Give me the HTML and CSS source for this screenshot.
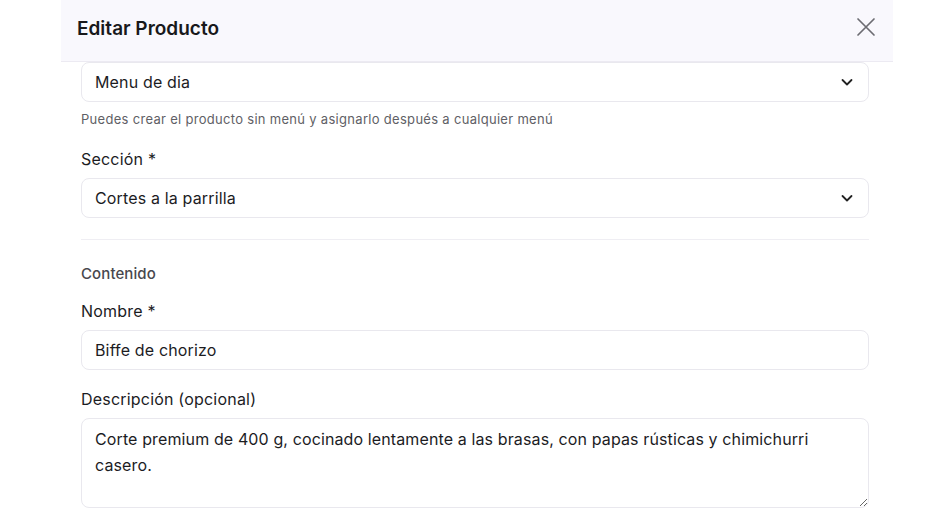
FILE: index.html
```html
<!DOCTYPE html>
<html lang="es">
<head>
<meta charset="utf-8">
<title>Editar Producto</title>
<link rel="stylesheet" href="styles.css">
</head>
<body>
<div class="modal">
  <header class="modal-header">
    <h2 class="modal-title">Editar Producto</h2>
    <button class="close-btn" aria-label="Cerrar">
      <svg width="20" height="20" viewBox="0 0 20 20" fill="none" stroke="currentColor" stroke-width="1.7" stroke-linecap="round"><path d="M2 2L18 18M18 2L2 18"/></svg>
    </button>
  </header>
  <div class="modal-body">
    <div class="select">
      <span>Menu de dia</span>
      <svg class="chev" width="14" height="14" viewBox="0 0 14 14" fill="none" stroke="currentColor" stroke-width="1.8" stroke-linecap="round" stroke-linejoin="round"><path d="M2.5 5L7 9.5L11.5 5"/></svg>
    </div>
    <p class="helper">Puedes crear el producto sin menú y asignarlo después a cualquier menú</p>

    <label class="label label-first">Sección *</label>
    <div class="select">
      <span>Cortes a la parrilla</span>
      <svg class="chev" width="14" height="14" viewBox="0 0 14 14" fill="none" stroke="currentColor" stroke-width="1.8" stroke-linecap="round" stroke-linejoin="round"><path d="M2.5 5L7 9.5L11.5 5"/></svg>
    </div>

    <hr class="divider">

    <h3 class="section-title">Contenido</h3>

    <label class="label label-name">Nombre *</label>
    <input class="input" type="text" value="Biffe de chorizo">

    <label class="label label-desc">Descripción (opcional)</label>
    <textarea class="textarea">Corte premium de 400 g, cocinado lentamente a las brasas, con papas rústicas y chimichurri casero.</textarea>
  </div>
</div>
</body>
</html>
```
FILE: styles.css
```css
* { box-sizing: border-box; }
html, body {
  margin: 0;
  background: #ffffff;
  font-family: Inter, "Noto Sans", "Liberation Sans", sans-serif;
  color: #1c1c1f;
}
.modal {
  margin-left: 61px;
  width: 832px;
  height: 524px;
  background: #ffffff;
  display: flex;
  flex-direction: column;
  overflow: hidden;
}
.modal-header {
  height: 62px;
  flex: none;
  background: #f9f8fd;
  border-bottom: 1px solid #eceaf2;
  display: flex;
  align-items: center;
  justify-content: space-between;
  padding: 0 15px 0 16px;
}
.modal-title {
  margin: 0;
  font-size: 19px;
  font-weight: 600;
  letter-spacing: 0;
  color: #18181b;
  padding-bottom: 5px;
}
.close-btn {
  border: 0;
  background: transparent;
  color: #6c6c72;
  padding: 0;
  width: 24px;
  height: 24px;
  display: flex;
  align-items: center;
  justify-content: center;
  margin-bottom: 8px;
}
.modal-body {
  padding: 0 24px 0 20px;
  display: flex;
  flex-direction: column;
}
.select {
  height: 40px;
  border: 1px solid #e9e8ee;
  border-radius: 8px;
  display: flex;
  align-items: center;
  justify-content: space-between;
  padding: 0 14px 0 13px;
  font-size: 16px;
  letter-spacing: 0.15px;
  color: #1c1c1f;
}
.chev { color: #222; }
.helper {
  margin: 8px 0 0;
  font-size: 13px;
  line-height: 18px;
  letter-spacing: 0.3px;
  color: #5f5f66;
}
.label {
  display: block;
  font-size: 16px;
  line-height: 24px;
  font-weight: 400;
  letter-spacing: 0.2px;
  color: #1c1c1f;
  margin-bottom: 7px;
}
.label-first { margin-top: 19px; }
.divider {
  border: 0;
  border-top: 1px solid #efeef3;
  margin: 21px 0 0;
  height: 0;
}
.section-title {
  margin: 24px 0 0;
  font-size: 15px;
  line-height: 20px;
  font-weight: 500;
  letter-spacing: 0.1px;
  color: #48484e;
}
.label-name { margin-top: 15px; }
.label-desc { margin-top: 17px; }
.input {
  height: 40px;
  width: 100%;
  border: 1px solid #e9e8ee;
  border-radius: 8px;
  padding: 0 13px;
  font-family: inherit;
  font-size: 16px;
  letter-spacing: 0.15px;
  color: #1c1c1f;
  background: #fff;
  outline: none;
}
.textarea {
  width: 100%;
  height: 90px;
  border: 1px solid #e9e8ee;
  border-radius: 8px;
  padding: 7px 13px;
  font-family: inherit;
  font-size: 16px;
  line-height: 26px;
  letter-spacing: 0.12px;
  color: #1c1c1f;
  background: #fff;
  resize: vertical;
  outline: none;
}
```
